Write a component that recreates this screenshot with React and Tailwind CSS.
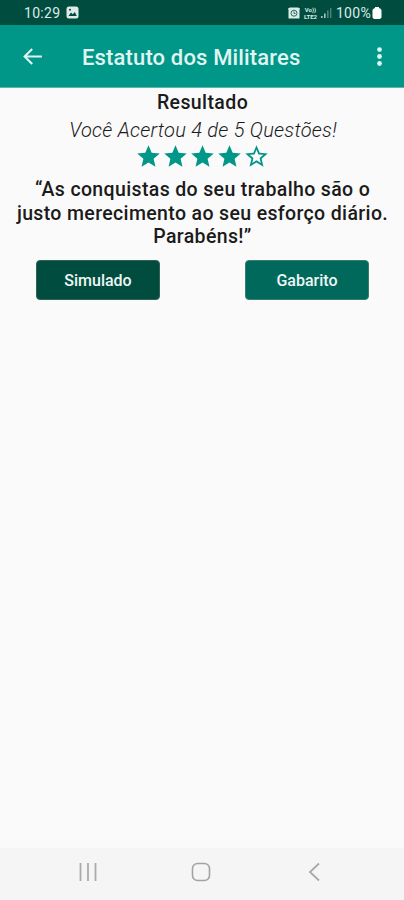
const STAR = 'M12 17.27 18.18 21l-1.64-7.03L22 9.24l-7.19-.61L12 2 9.19 8.63 2 9.24l5.46 4.73L5.82 21z';
const STAR_BORDER =
  'M22 9.24l-7.19-.62L12 2 9.19 8.63 2 9.24l5.46 4.73L5.82 21 12 17.27 18.18 21l-1.63-7.03L22 9.24zM12 15.4l-3.76 2.27 1-4.28-3.32-2.88 4.38-.38L12 6.1l1.71 4.04 4.38.38-3.32 2.88 1 4.28L12 15.4z';

const StatusBar = () => (
  <div className="h-[25px] bg-[#004d40] flex items-center justify-between pl-[24px] pr-[22px] text-[#dcebe7]">
    <div className="flex items-center gap-[6px]">
      <span className="text-[14px] leading-none tracking-[0.3px]">10:29</span>
      <svg className="w-[13px] h-[13px]" viewBox="0 0 13 13">
        <rect x="0.5" y="0.5" width="12" height="12" rx="2.5" fill="currentColor" />
        <path d="M2.5 10 5 6.5l1.8 1.8L8.8 6l2 4z" fill="#004d40" />
        <circle cx="4" cy="3.8" r="1" fill="#004d40" />
      </svg>
    </div>
    <div className="flex items-center">
      <svg className="w-[12px] h-[12px]" viewBox="0 0 12 12">
        <path d="M0 1.5 2 .5h8l2 1-.5 1.5V11.5H.5V3z" fill="currentColor" />
        <circle cx="6" cy="6.2" r="3" fill="none" stroke="#004d40" strokeWidth="0.8" />
        <path d="M6 4.5v2h1.5" fill="none" stroke="#004d40" strokeWidth="0.8" />
      </svg>
      <div className="ml-[3px] w-[15px] flex flex-col items-center text-[6px] leading-[7px] font-bold">
        <span>Vo))</span>
        <span>LTE2</span>
      </div>
      <svg className="ml-[2px] w-[12px] h-[11px]" viewBox="0 0 12 11">
        <path d="M1 9h1.6v2H1zM4 6.5h1.6V11H4z" fill="currentColor" opacity="0.75" />
        <path d="M7 3.5h1.6V11H7zM10 1h1.4v10H10z" fill="currentColor" opacity="0.35" />
      </svg>
      <span className="ml-[4px] text-[14px] leading-none tracking-[0.3px]">100%</span>
      <svg className="ml-[1px] w-[10px] h-[12px]" viewBox="0 0 10 12">
        <path d="M3 0h4v1.2h1L9.5 3v7.5L8 12H2L.5 10.5V3L2 1.2h1z" fill="#fff" />
      </svg>
    </div>
  </div>
);

const Toolbar = () => (
  <header className="h-[63px] bg-[#009688] border-b border-[#5fb5ac] flex items-center pl-[20px] pr-[12px] text-[#e0f5f1]">
    <svg className="w-[25px] h-[25px]" viewBox="0 0 24 24" fill="currentColor">
      <path d="M21 11H6.83l5.59-5.59L11 4l-8 8 8 8 1.41-1.41L6.83 13H21v-2z" />
    </svg>
    <h1 className="ml-[37px] pt-[3px] text-[22px] leading-none font-medium tracking-[0.15px] whitespace-nowrap">
      Estatuto dos Militares
    </h1>
    <svg className="ml-auto w-[25px] h-[25px]" viewBox="0 0 24 24" fill="currentColor">
      <circle cx="12" cy="5.3" r="2.3" />
      <circle cx="12" cy="12" r="2.3" />
      <circle cx="12" cy="18.7" r="2.3" />
    </svg>
  </header>
);

const Stars = ({ acertos, total }) => (
  <div className="flex justify-center">
    {Array.from({ length: total }, (_, i) => (
      <svg key={i} className="w-[27px] h-[27px]" viewBox="0 0 24 24" fill="#009688">
        <path d={i < acertos ? STAR : STAR_BORDER} />
      </svg>
    ))}
  </div>
);

const NavBar = () => (
  <nav className="h-[52px] bg-[#f5f5f5] flex items-center justify-between pl-[78px] pr-[80px] pb-[4px]">
    <svg className="w-[20px] h-[20px]" viewBox="0 0 20 20" stroke="#ababab" strokeWidth="1.8">
      <path d="M2.5 1v18M10 1v18M17.5 1v18" />
    </svg>
    <svg className="w-[20px] h-[20px]" viewBox="0 0 20 20" fill="none" stroke="#a3a3a3" strokeWidth="1.6">
      <rect x="1.5" y="1.5" width="17" height="17" rx="5" />
    </svg>
    <svg className="w-[20px] h-[20px]" viewBox="0 0 20 20" fill="none" stroke="#a8a8a8" strokeWidth="1.8">
      <path d="M15 1.5 6 10l9 8.5" />
    </svg>
  </nav>
);

const App = () => {
  return (
    <div className="w-full h-screen flex flex-col bg-[#fafafa] font-['Roboto',sans-serif] text-[#1b1b1b] overflow-hidden">
      <StatusBar />
      <Toolbar />

      <main className="flex-1 text-center">
        <h2 className="mt-[1px] pl-[1px] text-[19.5px] leading-[28px] font-medium tracking-[0.4px]">Resultado</h2>
        <p className="pl-[2px] text-[20px] leading-[26px] italic font-light tracking-[0.25px]">
          Você Acertou 4 de 5 Questões!
        </p>
        <Stars acertos={4} total={5} />
        <p className="mt-[8px] pl-[1px] text-[19.5px] leading-[23.5px] font-medium tracking-[0.36px] whitespace-nowrap">
          “As conquistas do seu trabalho são o
          <br />
          justo merecimento ao seu esforço diário.
          <br />
          Parabéns!”
        </p>
        <div className="mt-[11px] pl-[36px] pr-[35px] flex justify-between text-[16px] font-medium text-[#eef7f5]">
          <button className="w-[124px] h-[40px] pt-[2px] rounded-[4px] bg-[#004d40] border border-[#33614f]">Simulado</button>
          <button className="w-[124px] h-[40px] pt-[2px] rounded-[4px] bg-[#00695c] border border-[#3b7d6a]">Gabarito</button>
        </div>
      </main>

      <NavBar />
    </div>
  );
};

export default App;
